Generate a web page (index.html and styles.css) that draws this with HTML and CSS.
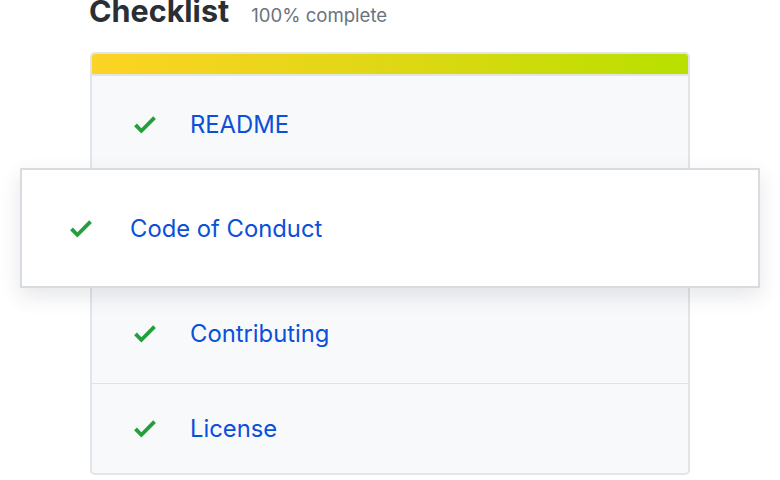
FILE: index.html
```html
<!DOCTYPE html>
<html lang="en">
<head>
  <meta charset="utf-8" />
  <title>Checklist</title>
  <link rel="stylesheet" href="styles.css">
</head>
<body>
  <div class="page">
    <div class="heading">
      <h2>Checklist</h2>
      <span class="progress">100% complete</span>
    </div>

    <div class="checklist">
      <div class="bar"></div>
      <div class="item first">
        <svg class="check" viewBox="0 0 12 16"><path d="M12 5l-8 8-4-4 1.5-1.5L4 10l6.5-6.5L12 5z"/></svg>
        <a href="#">README</a>
      </div>
      <div class="item hidden-slot"></div>
      <div class="item">
        <svg class="check" viewBox="0 0 12 16"><path d="M12 5l-8 8-4-4 1.5-1.5L4 10l6.5-6.5L12 5z"/></svg>
        <a href="#">Contributing</a>
      </div>
      <div class="item last">
        <svg class="check" viewBox="0 0 12 16"><path d="M12 5l-8 8-4-4 1.5-1.5L4 10l6.5-6.5L12 5z"/></svg>
        <a href="#">License</a>
      </div>

      <!-- lifted item -->
      <div class="lifted">
        <svg class="check" viewBox="0 0 12 16"><path d="M12 5l-8 8-4-4 1.5-1.5L4 10l6.5-6.5L12 5z"/></svg>
        <a href="#">Code of Conduct</a>
      </div>
    </div>
  </div>
</body>
</html>
```

FILE: styles.css
```css
body {
  margin: 0;
  background: #fff;
  font-family: Inter, "Liberation Sans", sans-serif;
  overflow: hidden;
}

.page {
  padding-left: 89px;
  width: 601px;
}

.heading {
  display: flex;
  align-items: baseline;
  gap: 22px;
  height: 54px;
  margin-top: -2px;
  line-height: 1;
}

.heading h2 {
  margin: -2px 0 0;
  font-size: 30.5px;
  font-weight: 700;
  color: #2b2f33;
}

.progress {
  font-size: 18.6px;
  color: #6a737d;
}

.checklist {
  position: relative;
  margin-left: 1px;
  border: 2px solid #e1e4e8;
  border-radius: 5px;
  background: #f8f9fb;
}

.bar {
  height: 20px;
  border-radius: 3px 3px 0 0;
  background: linear-gradient(90deg, #fdd325, #dcd812 55%, #b8e000);
  border-bottom: 2px solid #e1e4e8;
}

.item {
  display: flex;
  align-items: center;
  gap: 34px;
  padding-left: 42px;
  height: 100px;
  border-bottom: 1px solid #dfe2e6;
}

.item.first {
  height: 97px;
}

.item.hidden-slot {
  height: 109px;
  border-bottom: none;
}

.item.last {
  height: 89px;
  border-bottom: none;
}

.check {
  width: 22px;
  height: 29px;
  fill: #22a03a;
  flex: none;
}

.item a, .lifted a {
  font-size: 23.8px;
  color: #0a50d8;
  text-decoration: none;
}

.lifted {
  position: absolute;
  left: -72px;
  top: 114px;
  width: 740px;
  height: 120px;
  display: flex;
  align-items: center;
  gap: 38px;
  padding-left: 48px;
  box-sizing: border-box;
  background: #fff;
  border: 2px solid #d8dbe0;
  box-shadow: 0 8px 20px rgba(40, 50, 70, 0.12);
}
```
